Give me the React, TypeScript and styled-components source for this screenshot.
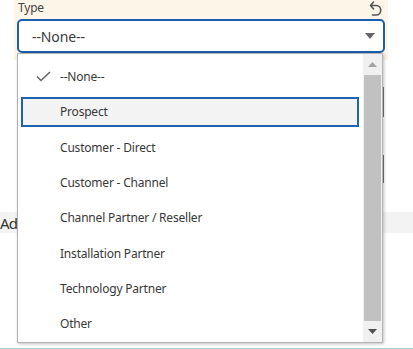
import styled, { createGlobalStyle } from "styled-components";

const GlobalStyle = createGlobalStyle`
  body {
    margin: 0;
    font-family: "Noto Sans", "Open Sans", sans-serif;
    background: #ffffff;
  }
`;

const Page = styled.div`
  position: relative;
  width: 413px;
  height: 349px;
  overflow: hidden;
  background: #ffffff;
`;

const FieldArea = styled.div`
  margin-left: 14px;
  width: 374px;
  height: 60px;
  background: #fdf5e8;
  box-sizing: border-box;
  padding: 0 3px 0 3px;
`;

const LabelRow = styled.div`
  display: flex;
  align-items: center;
  justify-content: space-between;
  height: 19px;
  padding: 0 3px 0 1px;
`;

const Label = styled.span`
  font-size: 12px;
  color: #444444;
  line-height: 14px;
  margin-top: -4px;
  letter-spacing: -0.2px;
`;

const UndoIcon = styled.svg`
  margin-top: -3px;
`;

const SelectBox = styled.div`
  display: flex;
  align-items: center;
  justify-content: space-between;
  height: 34px;
  box-sizing: border-box;
  width: 368px;
  border: 2px solid #1b5eab;
  border-radius: 5px;
  background: #ffffff;
  padding: 0 8px 0 13px;
  font-size: 14px;
  color: #3a3a3a;
  letter-spacing: -0.1px;
`;

const BackRow = styled.div`
  margin-top: 152px;
  height: 21px;
  background: #f3f3f3;
  display: flex;
  align-items: center;
  font-size: 15px;
  letter-spacing: -0.8px;
  color: #333333;
`;

const BottomLine = styled.div`
  position: absolute;
  left: 0;
  right: 0;
  bottom: 0;
  height: 1px;
  background: #a8d6de;
`;

const SideTick = styled.div<{ $top: number; $height: number }>`
  position: absolute;
  left: 383px;
  top: ${(p) => p.$top}px;
  width: 1px;
  height: ${(p) => p.$height}px;
  background: #777777;
`;

const Dropdown = styled.div`
  position: absolute;
  top: 53px;
  left: 17px;
  width: 366px;
  height: 290px;
  box-sizing: border-box;
  border: 1px solid #b5b5b5;
  background: #ffffff;
  box-shadow: 1px 1px 3px rgba(0, 0, 0, 0.25);
  display: flex;
`;

const List = styled.div`
  flex: 1;
  padding-top: 5px;
`;

const Item = styled.div<{ $active?: boolean }>`
  height: 35.3px;
  box-sizing: border-box;
  display: flex;
  align-items: center;
  font-size: 12px;
  letter-spacing: -0.2px;
  color: #383838;
  position: relative;
  padding-left: 42px;

  ${(p) =>
    p.$active &&
    `
    &::before {
      content: "";
      position: absolute;
      left: 3px;
      right: 4px;
      top: 3px;
      bottom: 3px;
      background: #f3f3f3;
      border: 2px solid #1f64b0;
    }
  `}
`;

const ItemText = styled.span`
  position: relative;
`;

const Check = styled.svg`
  position: absolute;
  left: 18px;
  top: 12px;
`;

const Scrollbar = styled.div`
  width: 19px;
  background: #f0f0f0;
  display: flex;
  flex-direction: column;
  align-items: center;
`;

const ArrowCell = styled.div`
  height: 21px;
  width: 100%;
  display: flex;
  align-items: center;
  justify-content: center;
`;

const Thumb = styled.div`
  flex: 1;
  width: 17px;
  background: #c1c1c1;
`;

const options = [
  "--None--",
  "Prospect",
  "Customer - Direct",
  "Customer - Channel",
  "Channel Partner / Reseller",
  "Installation Partner",
  "Technology Partner",
  "Other",
];

export default function App() {
  return (
    <>
      <GlobalStyle />
      <Page>
        <FieldArea>
          <LabelRow>
            <Label>Type</Label>
            <UndoIcon width="13" height="15" viewBox="0 0 13 15">
              <path
                d="M4.5 1 L1.5 4.5 L4.5 8 M1.8 4.5 H7 A4.7 4.7 0 0 1 7 14 H3.5"
                fill="none"
                stroke="#555"
                strokeWidth="1.6"
                strokeLinejoin="round"
                strokeLinecap="round"
              />
            </UndoIcon>
          </LabelRow>
          <SelectBox>
            <span>--None--</span>
            <svg width="10" height="6" viewBox="0 0 10 6">
              <path d="M0 0 H10 L5 6 Z" fill="#666" />
            </svg>
          </SelectBox>
        </FieldArea>
        <BackRow>Ad</BackRow>
        <SideTick $top={87} $height={30} />
        <SideTick $top={155} $height={28} />
        <BottomLine />
        <Dropdown>
          <List>
            {options.map((o, i) => (
              <Item key={o} $active={i === 1}>
                {i === 0 && (
                  <Check width="15" height="11" viewBox="0 0 15 11">
                    <path d="M1 5.5 L5 9.5 L14 1" fill="none" stroke="#666" strokeWidth="1.6" />
                  </Check>
                )}
                <ItemText>{o}</ItemText>
              </Item>
            ))}
          </List>
          <Scrollbar>
            <ArrowCell>
              <svg width="9" height="5" viewBox="0 0 9 5">
                <path d="M0 5 H9 L4.5 0 Z" fill="#a3a3a3" />
              </svg>
            </ArrowCell>
            <Thumb />
            <ArrowCell>
              <svg width="9" height="5" viewBox="0 0 9 5">
                <path d="M0 0 H9 L4.5 5 Z" fill="#505050" />
              </svg>
            </ArrowCell>
          </Scrollbar>
        </Dropdown>
      </Page>
    </>
  );
}
